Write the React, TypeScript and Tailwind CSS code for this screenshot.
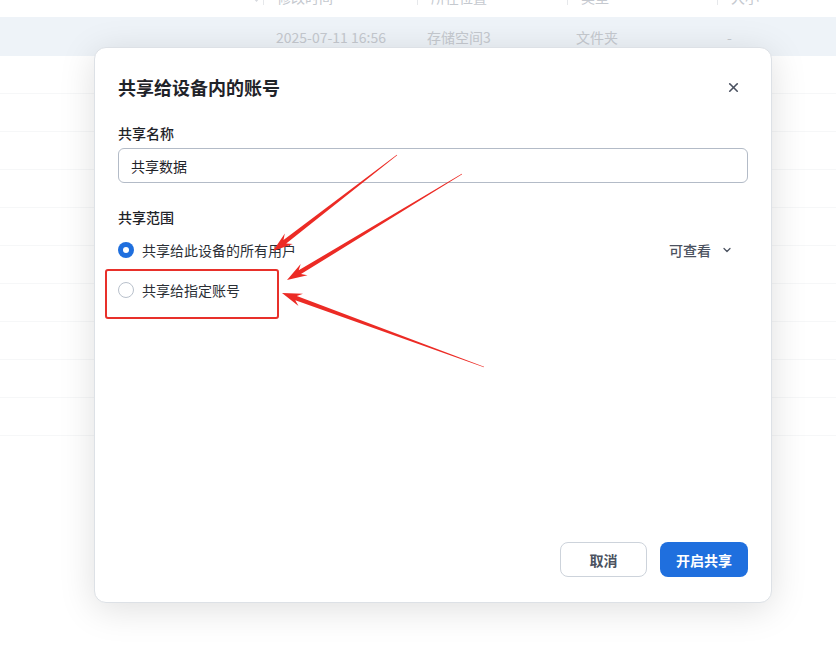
import { X, ChevronDown } from "lucide-react";

// 共享弹窗 — 背景是文件列表（被遮罩冲淡），上层是对话框和红色标注。

const font = { fontFamily: '"Noto Sans CJK SC", "Noto Sans", sans-serif' };

type Pt = [number, number];

/** 由尾部到箭尖的渐粗红色箭头（带倒钩），返回 polygon 的 points。 */
function arrowPoints(tail: Pt, tip: Pt): string {
  const [tx, ty] = tail;
  const [px, py] = tip;
  const len = Math.hypot(px - tx, py - ty);
  const dx = (px - tx) / len;
  const dy = (py - ty) / len;
  const nx = -dy;
  const ny = dx;
  const L = 20;
  const W = 6.5;
  const shaft = 2.2;
  const tailW = 0.3;
  const bx = px - dx * (L - 5);
  const by = py - dy * (L - 5);
  const hx = px - dx * L;
  const hy = py - dy * L;
  const pts: Pt[] = [
    [tx + nx * tailW, ty + ny * tailW],
    [bx + nx * shaft, by + ny * shaft],
    [hx + nx * W, hy + ny * W],
    [px, py],
    [hx - nx * W, hy - ny * W],
    [bx - nx * shaft, by - ny * shaft],
    [tx - nx * tailW, ty - ny * tailW],
  ];
  return pts.map((p) => p.map((v) => v.toFixed(1)).join(",")).join(" ");
}

const arrows: [Pt, Pt][] = [
  [[397, 155], [273, 251]],
  [[462, 174], [287, 280]],
  [[484, 367], [282, 293]],
];

function BackgroundTable() {
  const cols = "grid grid-cols-[263px_154px_150px_150px_1fr]";
  return (
    <div className="-mt-[23px] text-sm text-[#c5c9cf]">
      <div className={`${cols} h-[40px] items-center`}>
        <div className="flex justify-end pr-[3px]">
          <svg width="7" height="10" viewBox="0 0 7 10" className="text-[#d6d9de]">
            <path d="M0 6h7L3.5 10z" fill="currentColor" />
            <path d="M0 4h7L3.5 0z" fill="#eceef1" />
          </svg>
        </div>
        {["修改时间", "所在位置", "类型", "大小"].map((h) => (
          <div key={h} className="flex items-center">
            <span className="h-4 w-px bg-[#e6e8eb]" />
            <span className="pl-[13px]">{h}</span>
          </div>
        ))}
      </div>
      <div className={`${cols} h-[39px] items-center bg-[#eef3f8]`}>
        <div />
        <div className="pl-[13px]">2025-07-11 16:56</div>
        <div className="pl-[10px]">存储空间3</div>
        <div className="pl-[9px]">文件夹</div>
        <div className="pl-[10px]">-</div>
      </div>
      {Array.from({ length: 10 }).map((_, i) => (
        <div key={i} className="h-[38px] border-b border-[#f6f7f8]" />
      ))}
    </div>
  );
}

function Radio({ checked }: { checked?: boolean }) {
  return checked ? (
    <span className="flex h-4 w-4 items-center justify-center rounded-full bg-[#1f6fde]">
      <span className="h-[6px] w-[6px] rounded-full bg-white" />
    </span>
  ) : (
    <span className="h-4 w-4 rounded-full border border-[#b9c1cc] bg-white" />
  );
}

function ShareDialog() {
  return (
    <div className="absolute left-[94px] top-[47px] flex h-[556px] w-[678px] flex-col rounded-xl border border-[#dde1e6] bg-white px-[23px] pb-[25px] shadow-[0_6px_36px_rgba(0,0,0,0.13)]">
      <div className="mt-7 flex h-[22px] items-center justify-between">
        <h2 className="text-[18px] font-bold leading-[22px] text-[#1f2329]">共享给设备内的账号</h2>
        <button type="button" className="mr-[7px] flex h-4 w-4 items-center justify-center text-[#4a5160]">
          <X className="h-[15px] w-[15px]" strokeWidth={2.6} />
        </button>
      </div>

      <div className="mt-[25px] text-sm font-medium leading-5 text-[#1f2329]">共享名称</div>
      <div className="mt-[5px] flex h-[35px] items-center rounded-md border border-[#b3bbc7] px-3 text-sm text-[#1f2329]">
        共享数据
      </div>

      <div className="mt-6 text-sm font-medium leading-5 text-[#1f2329]">共享范围</div>
      <div className="mt-[13px] flex h-5 items-center">
        <Radio checked />
        <span className="ml-2 text-sm text-[#2b2f36]">共享给此设备的所有用户</span>
        <span className="ml-auto flex items-center gap-[10px] pr-[15px] text-sm font-medium text-[#4b5260]">
          可查看
          <ChevronDown className="h-3 w-3" strokeWidth={2.5} />
        </span>
      </div>
      <div className="mt-5 flex h-5 items-center">
        <Radio />
        <span className="ml-2 text-sm text-[#2b2f36]">共享给指定账号</span>
      </div>

      <div className="mt-auto flex justify-end gap-[13px]">
        <button
          type="button"
          className="h-[35px] w-[87px] rounded-lg border border-[#cdd3db] bg-white text-sm font-bold text-[#4b5260]"
        >
          取消
        </button>
        <button type="button" className="h-[35px] w-[88px] rounded-lg bg-[#1f6fde] text-sm font-bold text-white">
          开启共享
        </button>
      </div>
    </div>
  );
}

export default function App() {
  return (
    <div className="relative h-[650px] w-full overflow-hidden bg-white" style={font}>
      <BackgroundTable />
      <ShareDialog />

      {/* annotations */}
      <div className="absolute left-[105px] top-[269px] h-[50px] w-[174px] rounded-[3px] border-2 border-[#e8302a]" />
      <svg className="pointer-events-none absolute inset-0" width="836" height="650">
        {arrows.map(([t, p], i) => (
          <polygon key={i} points={arrowPoints(t, p)} fill="#ec2b25" />
        ))}
      </svg>
    </div>
  );
}
